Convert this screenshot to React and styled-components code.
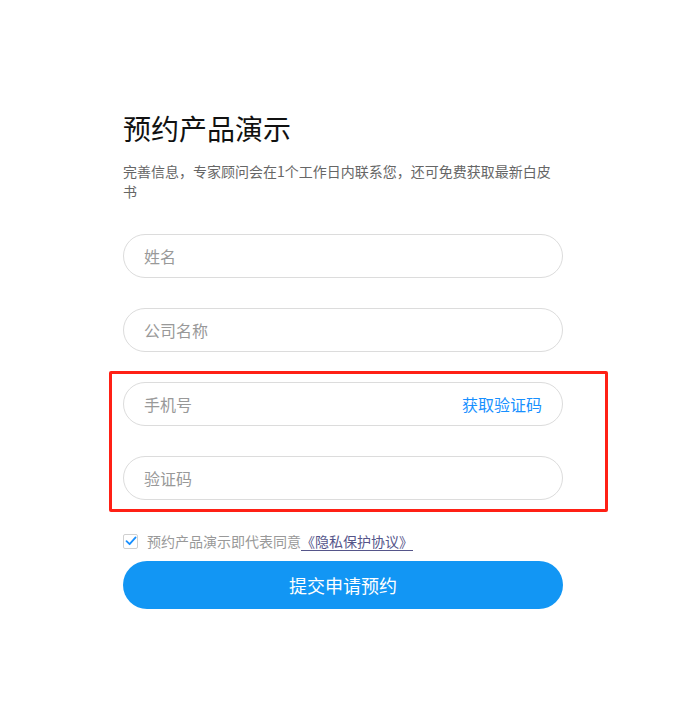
import React from "react";
import styled, { createGlobalStyle } from "styled-components";

const Global = createGlobalStyle`
  html, body { margin: 0; padding: 0; background: #fff; }
  body { font-family: "Noto Sans CJK SC", "Noto Sans", sans-serif; }
  * { box-sizing: border-box; }
`;

const Page = styled.div`
  width: 694px;
  min-height: 712px;
  padding: 107px 0 0 123px;
`;

const Form = styled.form`
  width: 440px;
  display: flex;
  flex-direction: column;
`;

const Title = styled.h1`
  margin: 0;
  font-size: 28px;
  line-height: 42px;
  font-weight: 400;
  color: #111;
`;

const Subtitle = styled.p`
  margin: 12px 0 0;
  font-size: 14px;
  line-height: 20px;
  color: #666;
`;

const Fields = styled.div`
  margin-top: 33px;
  display: flex;
  flex-direction: column;
  gap: 30px;
`;

const Group = styled.div`
  position: relative;
  display: flex;
  flex-direction: column;
  gap: 30px;
`;

const Highlight = styled.div`
  position: absolute;
  left: -14px;
  top: -11px;
  right: -45px;
  bottom: -12px;
  border: 3px solid #ff2015;
  border-radius: 2px;
  pointer-events: none;
`;

const Field = styled.div`
  height: 44px;
  border: 1px solid #dcdcdc;
  border-radius: 22px;
  display: flex;
  align-items: center;
  padding: 0 20px 0 20px;
  background: #fff;
`;

const Input = styled.input`
  flex: 1;
  min-width: 0;
  border: none;
  outline: none;
  background: transparent;
  font-family: inherit;
  font-size: 16px;
  color: #333;
  padding: 0;
  &::placeholder { color: #999; }
`;

const CodeLink = styled.span`
  font-size: 16px;
  color: #1890ff;
  cursor: pointer;
`;

const Agree = styled.label`
  margin-top: 31px;
  display: flex;
  align-items: center;
  font-size: 14px;
  line-height: 20px;
  color: #999;
`;

const Box = styled.span`
  width: 15px;
  height: 15px;
  border: 1px solid #d0d0d0;
  border-radius: 2px;
  display: inline-flex;
  align-items: center;
  justify-content: center;
  margin-right: 9px;
  background: #fff;
`;

const Policy = styled.a`
  color: #55558a;
  text-decoration: underline;
  text-underline-offset: 3px;
`;

const Submit = styled.button`
  margin-top: 10px;
  height: 48px;
  border: none;
  border-radius: 24px;
  background: #1296f4;
  color: #fff;
  font-family: inherit;
  font-size: 18px;
  cursor: pointer;
`;

export default function App() {
  return (
    <>
      <Global />
      <Page>
        <Form onSubmit={(e) => e.preventDefault()}>
          <Title>预约产品演示</Title>
          <Subtitle>完善信息，专家顾问会在1个工作日内联系您，还可免费获取最新白皮书</Subtitle>
          <Fields>
            <Field><Input placeholder="姓名" /></Field>
            <Field><Input placeholder="公司名称" /></Field>
            <Group>
              <Highlight />
              <Field>
                <Input placeholder="手机号" />
                <CodeLink>获取验证码</CodeLink>
              </Field>
              <Field><Input placeholder="验证码" /></Field>
            </Group>
          </Fields>
          <Agree>
            <Box>
              <svg width="12" height="12" viewBox="0 0 12 12">
                <path d="M1.5 6.2 L4.6 9.2 L10.6 2.4" fill="none" stroke="#1890ff" strokeWidth="1.8" strokeLinecap="round" strokeLinejoin="round" />
              </svg>
            </Box>
            预约产品演示即代表同意<Policy href="#">《隐私保护协议》</Policy>
          </Agree>
          <Submit type="submit">提交申请预约</Submit>
        </Form>
      </Page>
    </>
  );
}
